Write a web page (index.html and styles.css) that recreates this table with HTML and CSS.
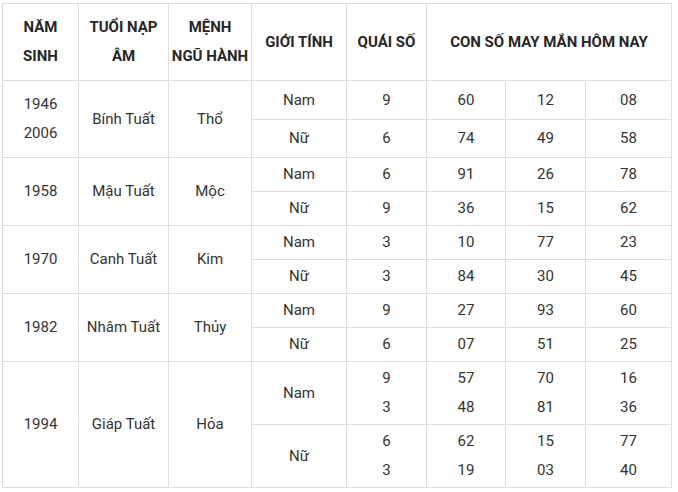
FILE: index.html
```html
<!DOCTYPE html>
<html lang="vi">
<head>
<meta charset="utf-8">
<link rel="stylesheet" href="styles.css">
</head>
<body>
<table class="lucky">
  <colgroup>
    <col class="c1"><col class="c2"><col class="c3"><col class="c4"><col class="c5"><col class="c6"><col class="c7"><col class="c8">
  </colgroup>
  <tr class="r-head">
    <th>NĂM<br>SINH</th>
    <th>TUỔI NẠP<br>ÂM</th>
    <th>MỆNH<br>NGŨ HÀNH</th>
    <th>GIỚI TÍNH</th>
    <th>QUÁI SỐ</th>
    <th colspan="3">CON SỐ MAY MẮN HÔM NAY</th>
  </tr>
  <tr class="r-a">
    <td rowspan="2">1946<br>2006</td>
    <td rowspan="2">Bính Tuất</td>
    <td rowspan="2">Thổ</td>
    <td>Nam</td><td>9</td><td>60</td><td>12</td><td>08</td>
  </tr>
  <tr class="r-b">
    <td>Nữ</td><td>6</td><td>74</td><td>49</td><td>58</td>
  </tr>
  <tr class="r-c">
    <td rowspan="2">1958</td>
    <td rowspan="2">Mậu Tuất</td>
    <td rowspan="2">Mộc</td>
    <td>Nam</td><td>6</td><td>91</td><td>26</td><td>78</td>
  </tr>
  <tr class="r-c">
    <td>Nữ</td><td>9</td><td>36</td><td>15</td><td>62</td>
  </tr>
  <tr class="r-c">
    <td rowspan="2">1970</td>
    <td rowspan="2">Canh Tuất</td>
    <td rowspan="2">Kim</td>
    <td>Nam</td><td>3</td><td>10</td><td>77</td><td>23</td>
  </tr>
  <tr class="r-c">
    <td>Nữ</td><td>3</td><td>84</td><td>30</td><td>45</td>
  </tr>
  <tr class="r-c">
    <td rowspan="2">1982</td>
    <td rowspan="2">Nhâm Tuất</td>
    <td rowspan="2">Thủy</td>
    <td>Nam</td><td>9</td><td>27</td><td>93</td><td>60</td>
  </tr>
  <tr class="r-c">
    <td>Nữ</td><td>6</td><td>07</td><td>51</td><td>25</td>
  </tr>
  <tr class="r-d">
    <td rowspan="2">1994</td>
    <td rowspan="2">Giáp Tuất</td>
    <td rowspan="2">Hỏa</td>
    <td>Nam</td><td>9<br>3</td><td>57<br>48</td><td>70<br>81</td><td>16<br>36</td>
  </tr>
  <tr class="r-d">
    <td>Nữ</td><td>6<br>3</td><td>62<br>19</td><td>15<br>03</td><td>77<br>40</td>
  </tr>
</table>
</body>
</html>
```
FILE: styles.css
```css
html, body {
  margin: 0;
  padding: 0;
  background: #ffffff;
}

body {
  padding: 3px 0 0 2px;
  font-family: Roboto, "Liberation Sans", sans-serif;
  color: #333333;
}

.lucky {
  border-collapse: collapse;
  table-layout: fixed;
  width: 669px;
  font-size: 15px;
  line-height: 29px;
}

.c1 { width: 76px; }
.c2 { width: 90px; }
.c3 { width: 83px; }
.c4 { width: 95px; }
.c5 { width: 80px; }
.c6 { width: 79px; }
.c7 { width: 80px; }
.c8 { width: 86px; }

.lucky th,
.lucky td {
  border: 1px solid #dddddd;
  padding: 0;
  text-align: center;
  vertical-align: middle;
}

.lucky th {
  font-weight: 700;
  color: #262626;
}

.r-head { height: 77px; }
.r-a { height: 39px; }
.r-b { height: 38px; }
.r-c { height: 34px; }
.r-d { height: 63px; }
```
